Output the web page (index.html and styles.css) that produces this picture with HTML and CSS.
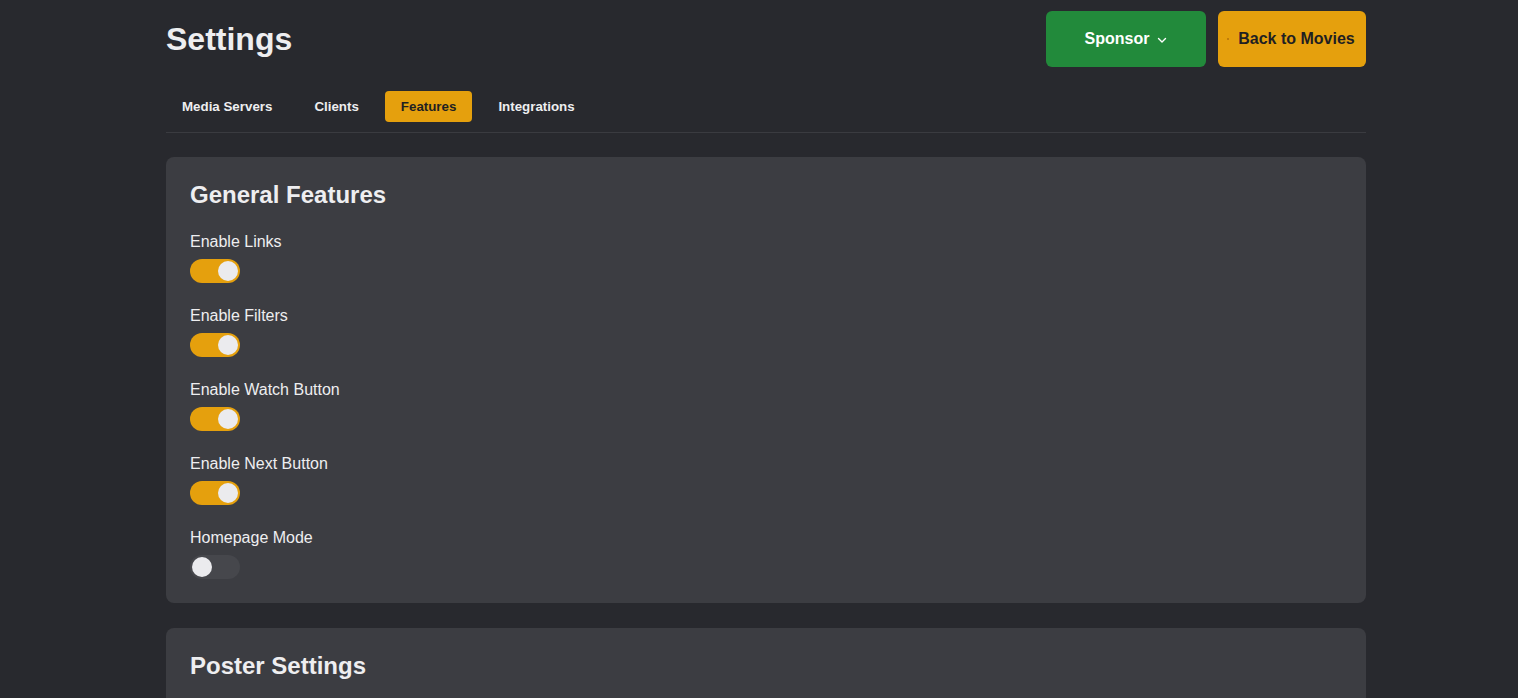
FILE: index.html
```html
<!DOCTYPE html>
<html lang="en">
<head>
<meta charset="utf-8">
<title>Settings</title>
<link rel="stylesheet" href="styles.css">
</head>
<body>
<div class="page">
  <header class="header">
    <h1 class="title">Settings</h1>
    <div class="actions">
      <button class="btn btn-sponsor">Sponsor
        <svg class="chev" width="10" height="10" viewBox="0 0 10 10"><path d="M1.5 3.5 L5 7 L8.5 3.5" fill="none" stroke="#fff" stroke-width="1.4" stroke-linecap="round" stroke-linejoin="round"/></svg>
      </button>
      <button class="btn btn-back"><span class="dot"></span>Back to Movies</button>
    </div>
  </header>
  <nav class="tabs">
    <button class="tab">Media Servers</button>
    <button class="tab">Clients</button>
    <button class="tab active">Features</button>
    <button class="tab">Integrations</button>
  </nav>
  <section class="card">
    <h2 class="card-title">General Features</h2>
    <div class="setting">
      <label class="label">Enable Links</label>
      <span class="toggle on"><span class="knob"></span></span>
    </div>
    <div class="setting">
      <label class="label">Enable Filters</label>
      <span class="toggle on"><span class="knob"></span></span>
    </div>
    <div class="setting">
      <label class="label">Enable Watch Button</label>
      <span class="toggle on"><span class="knob"></span></span>
    </div>
    <div class="setting">
      <label class="label">Enable Next Button</label>
      <span class="toggle on"><span class="knob"></span></span>
    </div>
    <div class="setting">
      <label class="label">Homepage Mode</label>
      <span class="toggle"><span class="knob"></span></span>
    </div>
  </section>
  <section class="card">
    <h2 class="card-title">Poster Settings</h2>
  </section>
</div>
</body>
</html>
```
FILE: styles.css
```css
* { box-sizing: border-box; }
html, body { margin: 0; padding: 0; }
body {
  background: #28292e;
  color: #eeeef0;
  font-family: "Liberation Sans", Arial, sans-serif;
  height: 698px;
  overflow: hidden;
  padding-left: 14px;
}
.page {
  width: 1200px;
  margin: 0 auto;
  padding-top: 11px;
}
.header {
  display: flex;
  justify-content: space-between;
  align-items: center;
  margin-bottom: 24px;
}
.title {
  margin: 0;
  font-size: 32px;
  font-weight: bold;
  color: #eeeef0;
}
.actions {
  display: flex;
  gap: 12px;
}
.btn {
  height: 56px;
  border: none;
  border-radius: 6px;
  font-family: "Liberation Sans", Arial, sans-serif;
  font-size: 16px;
  font-weight: bold;
  display: flex;
  align-items: center;
  justify-content: center;
  gap: 8px;
}
.btn-sponsor {
  width: 160px;
  background: #228a3b;
  color: #ffffff;
  padding-left: 6px;
}
.chev { margin-top: 2px; }
.btn-back {
  width: 148px;
  background: #e5a00d;
  color: #1f1f22;
  gap: 0;
  padding-left: 4px;
}
.dot {
  width: 2px;
  height: 2px;
  background: #b5720a;
  border-radius: 50%;
  margin-right: 9px;
}
.tabs {
  display: flex;
  gap: 10px;
  padding-bottom: 10px;
  border-bottom: 1px solid #3a3b40;
  margin-bottom: 24px;
}
.tab {
  height: 31px;
  padding: 0 16px;
  border: none;
  border-radius: 4px;
  background: transparent;
  color: #eeeef0;
  font-family: "Liberation Sans", Arial, sans-serif;
  font-size: 13.33px;
  font-weight: bold;
}
.tab.active {
  background: #e5a00d;
  color: #1f1f22;
}
.card {
  background: #3c3d42;
  border-radius: 8px;
  padding: 24px;
  margin-bottom: 25px;
}
.card-title {
  margin: 0 0 24px;
  font-size: 24px;
  line-height: 28px;
  font-weight: bold;
  color: #eeeef0;
}
.setting {
  display: flex;
  flex-direction: column;
  align-items: flex-start;
  gap: 8px;
  margin-bottom: 24px;
}
.setting:last-child { margin-bottom: 0; }
.label {
  font-size: 16px;
  line-height: 18px;
  color: #eeeef0;
}
.toggle {
  width: 50px;
  height: 24px;
  border-radius: 12px;
  background: #46474c;
  display: flex;
  align-items: center;
  padding: 0 2px;
}
.toggle.on {
  background: #e5a00d;
  justify-content: flex-end;
}
.knob {
  width: 20px;
  height: 20px;
  border-radius: 50%;
  background: #ebebee;
}
```
